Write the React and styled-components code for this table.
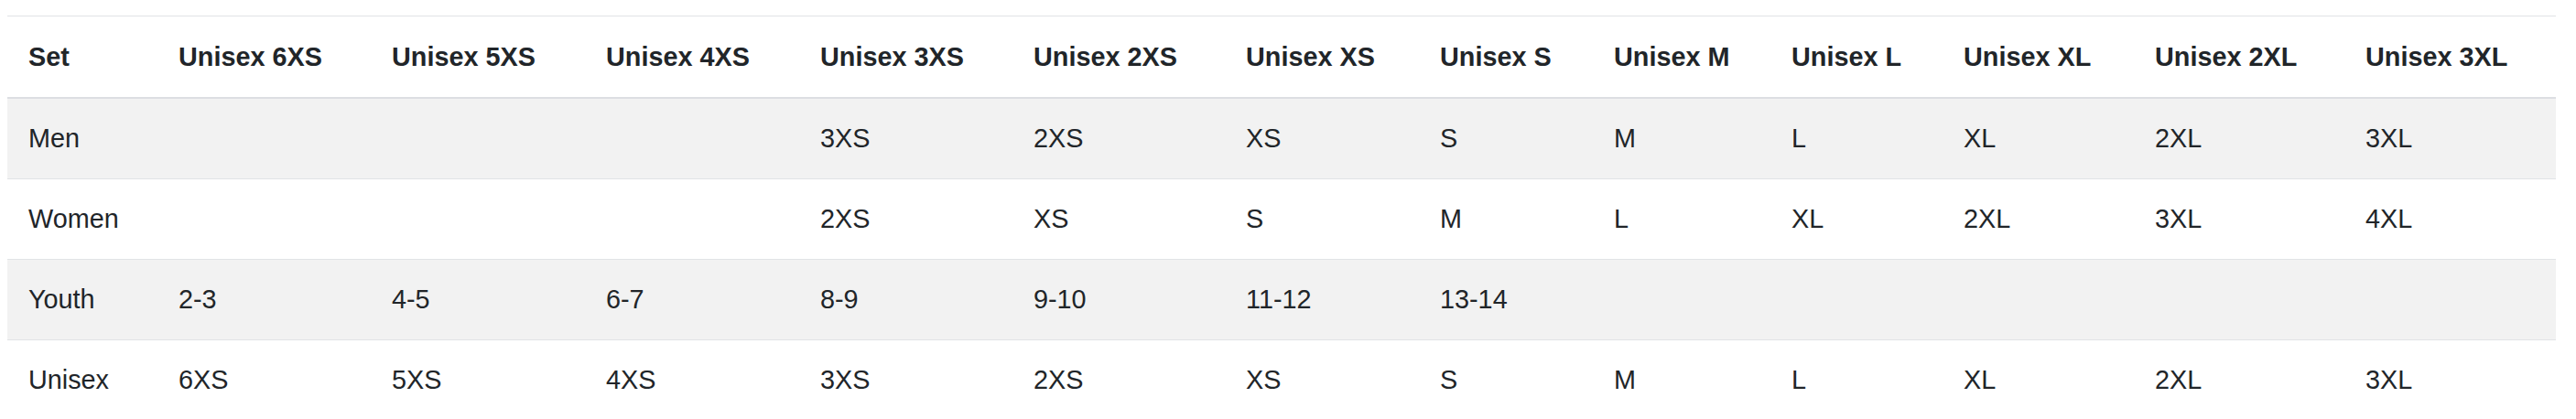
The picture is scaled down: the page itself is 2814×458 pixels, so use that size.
import React from "react";
import styled, { createGlobalStyle } from "styled-components";

const GlobalStyle = createGlobalStyle`
  html, body {
    margin: 0;
    padding: 0;
    background: #ffffff;
  }
  body {
    font-family: "Liberation Sans", Arial, Helvetica, sans-serif;
    color: #212529;
  }
`;

const Page = styled.div`
  padding: 17px 22px 0 8px;
`;

const Table = styled.table`
  width: 2784px;
  table-layout: fixed;
  border-collapse: collapse;
  font-size: 28.8px;
  line-height: 43px;
  color: #212529;
`;

const HeadCell = styled.th`
  text-align: left;
  font-weight: 700;
  padding: 23px 23px 22px 23px;
  border-top: 1px solid #e1e3e6;
  border-bottom: 2px solid #dcdee2;
  white-space: nowrap;
`;

const Row = styled.tr`
  background: ${(p) => (p.$striped ? "#f2f2f2" : "#ffffff")};
`;

const Cell = styled.td`
  text-align: left;
  font-weight: 400;
  padding: 22px 23px 22px 23px;
  border-top: 1px solid #e1e3e6;
  white-space: nowrap;
`;

const widths = [164, 233, 234, 234, 233, 232, 212, 190, 194, 188, 209, 230, 231];

const headers = [
  "Set",
  "Unisex 6XS",
  "Unisex 5XS",
  "Unisex 4XS",
  "Unisex 3XS",
  "Unisex 2XS",
  "Unisex XS",
  "Unisex S",
  "Unisex M",
  "Unisex L",
  "Unisex XL",
  "Unisex 2XL",
  "Unisex 3XL",
];

const rows = [
  ["Men", "", "", "", "3XS", "2XS", "XS", "S", "M", "L", "XL", "2XL", "3XL"],
  ["Women", "", "", "", "2XS", "XS", "S", "M", "L", "XL", "2XL", "3XL", "4XL"],
  ["Youth", "2-3", "4-5", "6-7", "8-9", "9-10", "11-12", "13-14", "", "", "", "", ""],
  ["Unisex", "6XS", "5XS", "4XS", "3XS", "2XS", "XS", "S", "M", "L", "XL", "2XL", "3XL"],
];

export default function App() {
  return (
    <>
      <GlobalStyle />
      <Page>
        <Table>
          <colgroup>
            {widths.map((w, i) => (
              <col key={i} style={{ width: w }} />
            ))}
          </colgroup>
          <thead>
            <tr>
              {headers.map((h) => (
                <HeadCell key={h}>{h}</HeadCell>
              ))}
            </tr>
          </thead>
          <tbody>
            {rows.map((r, ri) => (
              <Row key={r[0]} $striped={ri % 2 === 0}>
                {r.map((c, ci) => (
                  <Cell key={ci}>{c}</Cell>
                ))}
              </Row>
            ))}
          </tbody>
        </Table>
      </Page>
    </>
  );
}
